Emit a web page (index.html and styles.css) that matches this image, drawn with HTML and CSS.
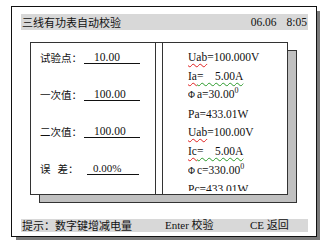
FILE: index.html
```html
<!DOCTYPE html>
<html>
<head>
<meta charset="utf-8">
<link rel="stylesheet" href="styles.css">
</head>
<body>
<div class="frame">
  <div class="titlebar">
    <span class="title">三线有功表自动校验</span>
    <span class="clock"><span class="date">06.06</span><span class="time">8:05</span></span>
  </div>
  <div class="box">
    <div class="left">
      <div class="row"><span class="label">试验点：</span><span class="field">10.00</span></div>
      <div class="row"><span class="label">一次值：</span><span class="field">100.00</span></div>
      <div class="row"><span class="label">二次值：</span><span class="field">100.00</span></div>
      <div class="row"><span class="label">误&nbsp;&nbsp;&nbsp;差：</span><span class="field field-err">0.00%</span></div>
    </div>
    <div class="right">
      <div class="list">
        <div class="line"><span class="sp-red">Uab</span>=100.000V</div>
        <div class="line"><span class="sp-red">Ia</span><span class="sp-green">=&nbsp;&nbsp;&nbsp;&nbsp;5.00A</span></div>
        <div class="line"><span class="phi">Φ</span>a=30.00<sup>0</sup></div>
        <div class="line">Pa=433.01W</div>
        <div class="line"><span class="sp-red">Uab</span>=100.00V</div>
        <div class="line"><span class="sp-red">Ic</span><span class="sp-green">=&nbsp;&nbsp;&nbsp;&nbsp;5.00A</span></div>
        <div class="line"><span class="phi">Φ</span>c=330.00<sup>0</sup></div>
        <div class="line">Pc=433.01W</div>
      </div>
    </div>
  </div>
  <div class="hintbar">
    <span class="hint1">提示：数字键增减电量</span>
    <span class="hint2">Enter 校验</span>
    <span class="hint3">CE 返回</span>
  </div>
</div>
</body>
</html>
```

FILE: styles.css
```css
html, body {
  margin: 0;
  padding: 0;
  background: #fff;
}
body {
  font-family: "Liberation Serif", "Noto Sans CJK SC", serif;
  color: #111;
  width: 324px;
  height: 244px;
  overflow: hidden;
}
.frame {
  margin: 6px 0 0 11px;
  width: 306px;
  box-sizing: border-box;
  border: 1px solid #111;
  box-shadow: 4px 4px 0 -1px #7a7a7a;
  padding: 7px 8px 4px 9px;
  background: #fff;
}
.titlebar {
  height: 16px;
  background: #d8d8d8;
  display: flex;
  align-items: center;
  justify-content: space-between;
  padding-left: 1px;
  font-size: 11px;
  line-height: 16px;
}
.title {
  font-family: "Noto Sans CJK SC", sans-serif;
  font-size: 11px;
  letter-spacing: 0;
}
.clock {
  font-family: "Liberation Serif", serif;
  font-size: 11.5px;
  display: flex;
  gap: 10px;
  padding-right: 1px;
}
.box {
  margin: 12px 0 0 9px;
  width: 258px;
  height: 153px;
  box-sizing: border-box;
  border: 1px solid #333;
  background: #fff;
  display: flex;
  box-shadow: 9px 8px 0 -1px #c0c0c0, 9px 8px 0 0 #333;
}
.left {
  width: 125px;
  box-sizing: border-box;
  border-right: 1px solid #333;
  padding: 8px 0 0 9px;
  display: flex;
  flex-direction: column;
  gap: 24px;
}
.row {
  height: 13px;
  display: flex;
  align-items: flex-end;
}
.label {
  font-family: "Noto Sans CJK SC", sans-serif;
  font-size: 10.5px;
  line-height: 12px;
  width: 44px;
  white-space: nowrap;
}
.field {
  display: inline-block;
  width: 46px;
  padding-left: 10px;
  line-height: 12px;
  border-bottom: 1px solid #111;
  font-size: 11.5px;
}
.field-err {
  margin-left: 3px;
  width: 46px;
  padding-left: 6px;
  font-size: 11px;
}
.right {
  margin-left: 6px;
  flex: 1;
  border-left: 1px solid #333;
  padding: 5px 0 0 25px;
}
.list {
  height: 143px;
  overflow: hidden;
  font-size: 11.5px;
  line-height: 18.6px;
}
.line {
  white-space: nowrap;
}
.sp-red {
  text-decoration: underline wavy #e02020;
  text-decoration-thickness: 1px;
  text-underline-offset: 2px;
}
.sp-green {
  text-decoration: underline wavy #2a9a2a;
  text-decoration-thickness: 1px;
  text-underline-offset: 2px;
}
.phi {
  font-size: 9.5px;
  margin-right: 2px;
}
sup {
  font-size: 8px;
  line-height: 0;
  vertical-align: 5px;
}
.hintbar {
  margin-top: 24px;
  height: 13px;
  background: #d8d8d8;
  display: flex;
  align-items: center;
  font-family: "Liberation Serif", "Noto Sans CJK SC", serif;
  font-size: 11px;
  line-height: 13px;
}
.hint1 {
  width: 144px;
  padding-left: 1px;
  box-sizing: border-box;
  font-family: "Noto Sans CJK SC", sans-serif;
}
.hint2 {
  width: 85px;
}
```
